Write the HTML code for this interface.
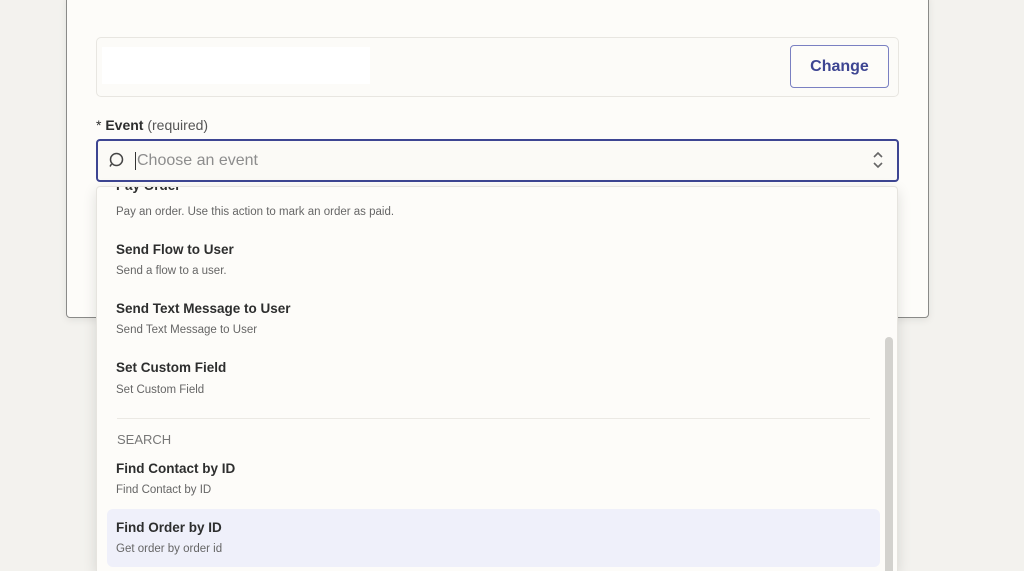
<!DOCTYPE html>
<html style="overflow:hidden;width:1024px;height:571px"><head><style>
*{margin:0;padding:0;box-sizing:border-box}
body{width:1024px;height:571px;overflow:hidden;background:#f3f2ee;font-family:"Liberation Sans",sans-serif;position:relative}
.card{position:absolute;left:66px;top:-5px;width:863px;height:323px;background:#fdfcf9;border:1.5px solid #8a8a88;border-radius:4px;box-shadow:0 2px 8px rgba(0,0,0,.08)}
.app{position:absolute;left:96px;top:37px;width:803px;height:60px;border:1px solid #e8e6e1;border-radius:5px;background:#fcfbf8}
.wh{position:absolute;left:102px;top:47px;width:268px;height:37px;background:#fff}
.btn{position:absolute;left:790px;top:45px;width:99px;height:43px;border:1.5px solid #7a80c2;border-radius:4px;color:#3d4592;font-weight:bold;font-size:16px;text-align:center;line-height:42px;background:#fdfcf9}
.lbl{position:absolute;left:96px;top:117px;font-size:14px;color:#2d2e2e}
.lbl b{font-weight:bold}.lbl span{color:#555}
.inp{position:absolute;left:96px;top:139px;width:803px;height:43px;border:2px solid #3d4592;border-radius:4px;background:#fbfaf6}
.ph{position:absolute;left:135px;top:152px;font-size:16px;color:#8d8d8d;border-left:1.5px solid #333;padding-left:1px;line-height:18px}
.dd{position:absolute;left:96px;top:186px;width:802px;height:385px;background:#fdfcf9;border:1px solid #e6e4df;border-bottom:none;border-radius:4px 4px 0 0;box-shadow:0 4px 14px rgba(0,0,0,.12);overflow:hidden}
.t{position:absolute;left:19px;font-size:13.5px;font-weight:bold;color:#2d2e2e}
.d{position:absolute;left:19px;font-size:11.5px;color:#666}
.sb{position:absolute;left:788px;top:150px;width:8px;height:260px;background:#d3d2ce;border-radius:4px}
</style></head><body>
<div class="card"></div>
<div class="app"></div><div class="wh"></div>
<div class="btn">Change</div>
<div class="lbl">* <b>Event</b> <span>(required)</span></div>
<div class="inp"></div>
<svg style="position:absolute;left:105px;top:150px" width="20" height="20" viewBox="0 0 20 20"><circle cx="11.5" cy="9.5" r="6" fill="none" stroke="#444" stroke-width="1.5"/><path d="M6.5 14 L5 16.5" stroke="#444" stroke-width="1.5"/></svg>
<div class="ph">Choose an event</div>
<svg style="position:absolute;left:871px;top:151px" width="14" height="18" viewBox="0 0 14 18"><path d="M3 6 L7 2 L11 6 M3 12 L7 16 L11 12" fill="none" stroke="#666" stroke-width="1.6"/></svg>
<div class="dd">
<div class="t" style="top:-9px">Pay Order</div>
<div class="d" style="top:19px">Pay an order. Use this action to mark an order as paid.</div>
<div class="t" style="top:55px">Send Flow to User</div>
<div class="d" style="top:78px">Send a flow to a user.</div>
<div class="t" style="top:114px">Send Text Message to User</div>
<div class="d" style="top:137px">Send Text Message to User</div>
<div class="t" style="top:173px">Set Custom Field</div>
<div class="d" style="top:197px">Set Custom Field</div>
<div style="position:absolute;left:20px;top:231px;width:753px;height:1px;background:#ebe9e4"></div>
<div style="position:absolute;left:20px;top:245px;font-size:13px;color:#777">SEARCH</div>
<div class="t" style="top:274px">Find Contact by ID</div>
<div class="d" style="top:297px">Find Contact by ID</div>
<div style="position:absolute;left:10px;top:322px;width:773px;height:58px;background:#eff0fa;border-radius:6px"></div>
<div class="t" style="top:333px">Find Order by ID</div>
<div class="d" style="top:356px">Get order by order id</div>
<div class="sb"></div>
</div>
</body></html>
